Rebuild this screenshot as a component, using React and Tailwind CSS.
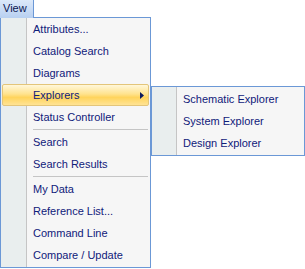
import React from 'react';

const MenuItem = ({ children }) => (
  <div className="h-[22px] flex items-center pl-[32px] whitespace-nowrap">{children}</div>
);

const Separator = () => (
  <div className="h-[3px] flex items-center pl-[32px] pr-[2px]">
    <div className="h-px w-full bg-[#c5c5c5]" />
  </div>
);

const SubMenu = () => (
  <div className="absolute left-[151px] top-[86px] w-[154px] border border-[#6b98d6] bg-[linear-gradient(to_right,#e9eeee_24px,#c5c5c5_24px,#c5c5c5_25px,#f6f6f6_25px)] py-px">
    {['Schematic Explorer', 'System Explorer', 'Design Explorer'].map((label) => (
      <div key={label} className="h-[22px] flex items-center pl-[31px] whitespace-nowrap">
        {label}
      </div>
    ))}
  </div>
);

export default function App() {
  return (
    <div className="relative w-[305px] h-[269px] bg-white text-[11px] text-[#10207a] font-['Liberation_Sans',Arial,sans-serif]">
      <div className="flex h-[18px] w-[151px]">
        <div className="w-[34px] h-[18px] pl-[3px] leading-[17px] text-[#0a1550] border-r border-[#6b98d6] bg-[linear-gradient(to_bottom,#dce9fa,#b8d0f1)]">
          View
        </div>
        <div className="flex-1 border-b border-[#6b98d6]" />
      </div>

      <div className="w-[151px] border-x border-b border-[#6b98d6] bg-[linear-gradient(to_right,#e9eeee_25px,#c5c5c5_25px,#c5c5c5_26px,#f6f6f6_26px)] pb-px">
        <MenuItem>Attributes...</MenuItem>
        <MenuItem>Catalog Search</MenuItem>
        <MenuItem>Diagrams</MenuItem>
        <div className="h-[22px] mx-px flex items-center pl-[30px] pr-[4px] rounded-[2px] border border-[#e3c57a] bg-[linear-gradient(to_bottom,#fff7da,#ffe38e_45%,#ffd45c_62%,#ffe394)]">
          <span>Explorers</span>
          <svg className="ml-auto" width="4" height="7" viewBox="0 0 4 7">
            <path d="M0 0 L4 3.5 L0 7 Z" fill="#0c1a5e" />
          </svg>
        </div>
        <MenuItem>Status Controller</MenuItem>
        <Separator />
        <MenuItem>Search</MenuItem>
        <MenuItem>Search Results</MenuItem>
        <Separator />
        <MenuItem>My Data</MenuItem>
        <MenuItem>Reference List...</MenuItem>
        <MenuItem>Command Line</MenuItem>
        <MenuItem>Compare / Update</MenuItem>
      </div>

      <SubMenu />
    </div>
  );
}
